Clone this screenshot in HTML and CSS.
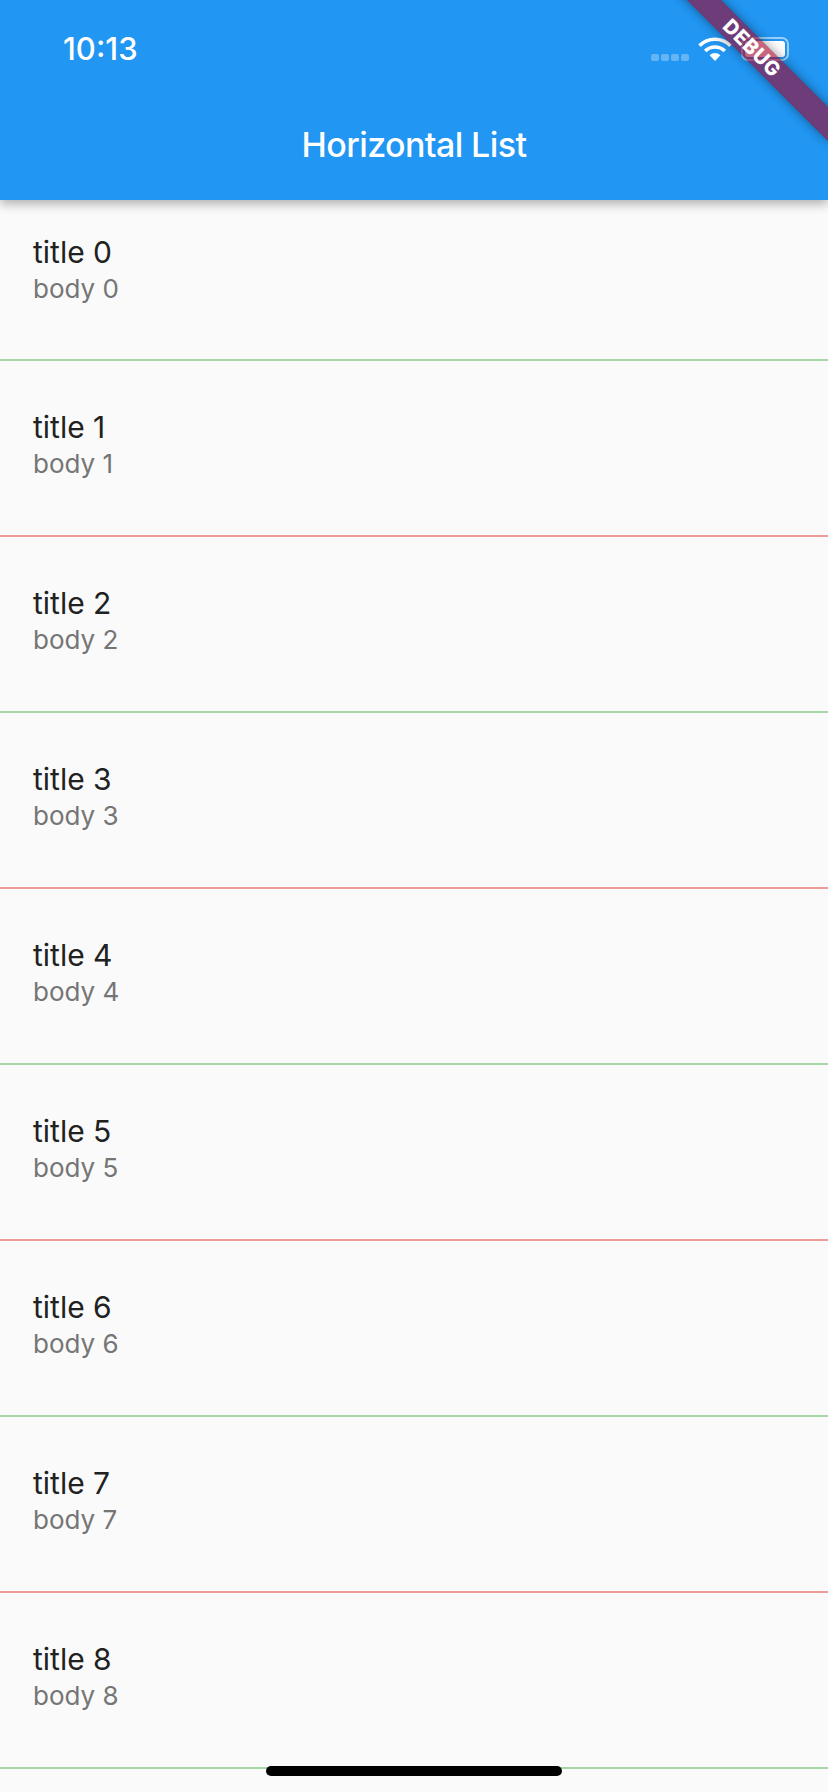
FILE: index.html
```html
<!DOCTYPE html>
<html lang="en">
<head>
<meta charset="utf-8">
<title>Horizontal List</title>
<link rel="stylesheet" href="styles.css">
</head>
<body>
<div class="screen">
  <header class="appbar">
    <div class="status">
      <span class="time">10:13</span>
      <div class="status-icons">
        <div class="signal"><i></i><i></i><i></i><i></i></div>
        <svg class="wifi" width="34" height="24" viewBox="0 0 34 24">
          <path d="M1.5 8.6 A22 22 0 0 1 32.5 8.6" fill="none" stroke="#fff" stroke-width="3.6"/>
          <path d="M7.2 14 A14 14 0 0 1 26.8 14" fill="none" stroke="#fff" stroke-width="3.6"/>
          <path d="M11.6 18.2 A7.6 7.6 0 0 1 22.4 18.2 L17 24 Z" fill="#fff"/>
        </svg>
        <div class="battery"><div class="battery-fill"></div></div>
      </div>
    </div>
    <h1 class="title">Horizontal List</h1>
  </header>
  <main class="list">
    <div class="row row-first green"><div class="row-title">title 0</div><div class="row-body">body 0</div></div>
    <div class="row red"><div class="row-title">title 1</div><div class="row-body">body 1</div></div>
    <div class="row green"><div class="row-title">title 2</div><div class="row-body">body 2</div></div>
    <div class="row red"><div class="row-title">title 3</div><div class="row-body">body 3</div></div>
    <div class="row green"><div class="row-title">title 4</div><div class="row-body">body 4</div></div>
    <div class="row red"><div class="row-title">title 5</div><div class="row-body">body 5</div></div>
    <div class="row green"><div class="row-title">title 6</div><div class="row-body">body 6</div></div>
    <div class="row red"><div class="row-title">title 7</div><div class="row-body">body 7</div></div>
    <div class="row green"><div class="row-title">title 8</div><div class="row-body">body 8</div></div>
  </main>
  <div class="home-bar"></div>
  <div class="ribbon-clip"><div class="ribbon">DEBUG</div></div>
</div>
</body>
</html>
```
FILE: styles.css
```css
* { box-sizing: border-box; }
html, body { margin: 0; padding: 0; }
body { background: #fafafa; font-family: Inter, "Noto Sans", sans-serif; }
.screen {
  position: relative;
  width: 828px;
  height: 1792px;
  overflow: hidden;
  background: #fafafa;
  display: flex;
  flex-direction: column;
}
.appbar {
  position: relative;
  z-index: 2;
  flex: none;
  height: 200px;
  background: #2196f3;
  color: #fff;
  box-shadow: 0 4px 10px rgba(0,0,0,.3);
}
.status {
  height: 88px;
  padding: 30px 39px 0 63px;
  display: flex;
  justify-content: space-between;
  align-items: flex-start;
}
.time { font-size: 31px; line-height: 38px; font-weight: 500; }
.status-icons { display: flex; align-items: flex-end; gap: 9px; height: 24px; margin-top: 7px; }
.signal { display: flex; gap: 2px; margin-right: 0; padding-bottom: 0; }
.signal i { width: 8px; height: 7px; border-radius: 2px; background: rgba(255,255,255,.3); display: block; }
.wifi { display: block; }
.battery {
  width: 48px;
  height: 24px;
  border: 2px solid rgba(255,255,255,.55);
  border-radius: 7px;
  padding: 2px;
}
.battery-fill { width: 100%; height: 100%; background: #fff; border-radius: 3px; }
.title {
  margin: 0;
  height: 112px;
  text-align: center;
  font-size: 34px;
  line-height: 114px;
  font-weight: 500;
  letter-spacing: -.6px;
}
.list { flex: 1; min-height: 0; }
.row {
  height: 176px;
  padding: 46px 0 0 33px;
  border-bottom: 2px solid;
}
.row-first { height: 161px; padding-top: 32px; }
.green { border-bottom-color: #a5d6a7; }
.red { border-bottom-color: #ef9a9a; }
.row-title { font-size: 30px; line-height: 40px; color: #212121; }
.row-body { font-size: 26px; line-height: 34px; color: #757575; }
.home-bar {
  position: absolute;
  left: 266px;
  bottom: 16px;
  width: 296px;
  height: 10px;
  border-radius: 5px;
  background: #000;
}
.ribbon-clip {
  position: absolute;
  z-index: 3;
  top: 0;
  right: 0;
  width: 240px;
  height: 200px;
  overflow: hidden;
  pointer-events: none;
}
.ribbon {
  position: absolute;
  left: 44px;
  top: 36px;
  width: 240px;
  height: 24px;
  transform: rotate(45deg);
  background: rgba(160, 0, 40, .6);
  box-shadow: 0 0 12px rgba(0,0,0,.4);
  color: #fff;
  text-align: center;
  font-weight: 800;
  font-size: 20px;
  line-height: 24px;
  letter-spacing: .5px;
}
```
